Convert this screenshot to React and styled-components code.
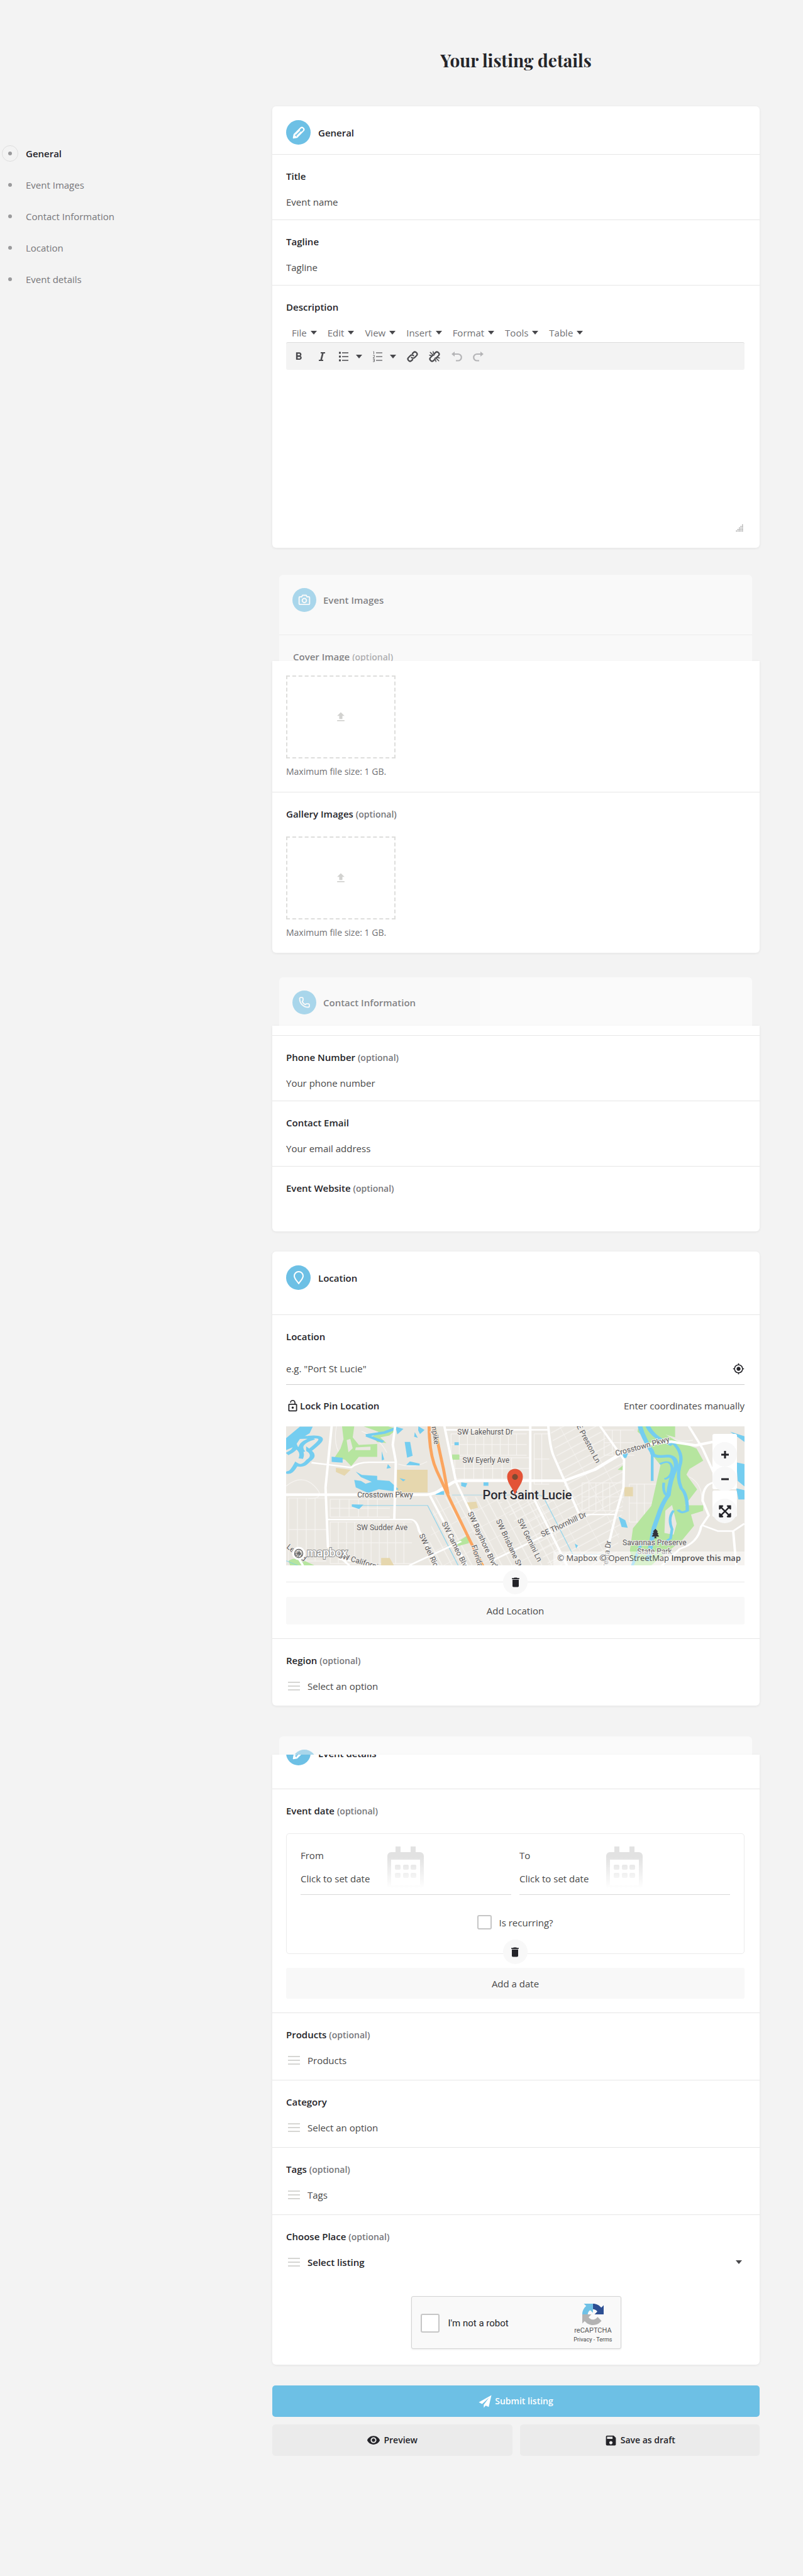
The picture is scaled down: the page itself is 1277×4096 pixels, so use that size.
import React from "react";
import styled, { createGlobalStyle, css } from "styled-components";
import {
  MdMyLocation,
  MdDelete,
  MdFormatBold,
  MdVisibility,
  MdSave,
  MdLockOpen,
  MdFileUpload,
} from "react-icons/md";
import { FaExpandArrowsAlt, FaTree } from "react-icons/fa";

const ink = "#242429";
const body = "#484848";
const line = "#e6e6e6";
const accent = "#6dc0e5";

const GlobalStyle = createGlobalStyle`
  * { box-sizing: border-box; }
  body {
    margin: 0;
    background: #f3f3f3;
    color: ${ink};
    font: 400 15px/20px "Open Sans", "Noto Sans", sans-serif;
  }
  button, input, select, textarea { font: inherit; color: inherit; }
  svg { display: block; flex: none; }
`;

const Page = styled.div`
  display: grid;
  grid-template-columns: 430px minmax(0, 1fr);
  padding: 0 69px 192px 3px;
`;
const Sidebar = styled.nav`
  padding-top: 231px;
`;
const NavList = styled.ul`
  list-style: none;
  margin: 0;
  padding: 0;
  display: flex;
  flex-direction: column;
  gap: 24px;
`;
const NavLink = styled.a`
  display: flex;
  align-items: center;
  gap: 12px;
  height: 26px;
  text-decoration: none;
  color: ${(p) => (p.$active ? ink : "#76767a")};
  font-weight: ${(p) => (p.$active ? 600 : 400)};
`;
const NavDot = styled.span`
  display: flex;
  align-items: center;
  justify-content: center;
  width: 26px;
  height: 26px;
  border-radius: 50%;
  border: 1px solid ${(p) => (p.$active ? "#dedede" : "transparent")};
  &::before {
    content: "";
    width: 6px;
    height: 6px;
    border-radius: 50%;
    background: #9a9a9c;
  }
`;
const PageTitle = styled.h1`
  margin: 0;
  padding: 76px 0 53px;
  text-align: center;
  font: 700 28px/40px "Playfair Display", "Liberation Serif", serif;
`;

const Card = styled.section`
  background: #fff;
  border-radius: ${(p) => (p.$joined ? "0 0 6px 6px" : "6px")};
  box-shadow: 0 1px 4px rgba(0, 0, 0, 0.07);
  margin-top: ${(p) => p.$gap || 0}px;
`;
const Ghost = styled.div`
  height: ${(p) => p.$height}px;
  margin: ${(p) => p.$gap}px 12px 0 11px;
  overflow: hidden;
  border-radius: 6px 6px 0 0;
  background: #fff;
  opacity: 0.55;
`;
const CardHead = styled.header`
  display: flex;
  align-items: center;
  gap: 12px;
  padding: 22px 24px ${(p) => p.$bottom}px 22px;
  border-bottom: 1px solid ${line};
`;
const GhostHead = styled(CardHead)`
  padding: 21px 21px 36px;
  gap: 11px;
`;
const ClippedHead = styled.header`
  height: 55px;
  overflow: hidden;
  border-bottom: 1px solid ${line};
  padding: 0 22px;
`;
const ClippedRow = styled.div`
  display: flex;
  align-items: center;
  gap: 12px;
  margin-top: -22px;
`;
const HeadStrip = styled.div`
  height: 16px;
  border-bottom: 1px solid ${line};
`;
const Badge = styled.span`
  display: flex;
  align-items: center;
  justify-content: center;
  width: ${(p) => p.$size || 39}px;
  height: ${(p) => p.$size || 39}px;
  border-radius: 50%;
  background: ${accent};
  color: #fff;
`;
const HeadTitle = styled.h2`
  margin: 0;
  font-size: inherit;
  line-height: 20px;
  font-weight: 600;
`;

const Field = styled.div`
  padding: 24px 24px ${(p) => p.$bottom || 18}px 22px;
  border-bottom: ${(p) => (p.$last ? 0 : 1)}px solid ${line};
`;
const UploadField = styled(Field)`
  padding-top: ${(p) => (p.$cut ? 23 : 24)}px;
`;
const Label = styled.label`
  display: block;
  font-weight: 600;
  margin-bottom: ${(p) => p.$gap || 21}px;
`;
const Optional = styled.small`
  font-size: 14px;
  line-height: 14px;
  color: #76767a;
`;
const control = css`
  display: block;
  width: 100%;
  min-width: 0;
  height: 20px;
  padding: 0;
  border: 0;
  outline: 0;
  background: transparent;
  line-height: 20px;
  &::placeholder { color: ${body}; opacity: 1; }
`;
const TextInput = styled.input`
  ${control}
`;
const SelectBox = styled.select`
  ${control}
  appearance: none;
  height: 22px;
  margin: -1px 0;
  color: ${(p) => (p.$strong ? ink : body)};
  font-weight: ${(p) => (p.$strong ? 600 : 400)};
`;
const IconRow = styled.div`
  display: flex;
  align-items: center;
  gap: 12px;
  padding: 0 4px 0 3px;
`;
const Caret = styled.span`
  flex: none;
  border: 5px solid transparent;
  border-top: 6px solid ${(p) => p.$color || "#48484c"};
  border-bottom: 0;
`;

const MenuBar = styled.div`
  display: flex;
  align-items: center;
  gap: 17px;
  height: 30px;
  padding: 0 9px;
`;
const MenuButton = styled.button`
  display: flex;
  align-items: center;
  gap: 6px;
  padding: 0;
  border: 0;
  background: none;
  color: #707073;
`;
const ToolBar = styled.div`
  display: flex;
  align-items: center;
  gap: 17px;
  height: 44px;
  padding: 0 10px;
  background: #f3f3f3;
  border-top: 1px solid #dcdcdc;
  border-radius: 3px;
`;
const ToolButton = styled.button`
  display: flex;
  align-items: center;
  justify-content: center;
  gap: 12px;
  padding: 0;
  border: 0;
  background: none;
  color: ${(p) => (p.disabled ? "#b4b4b6" : "#4a4a4e")};
`;
const EditorArea = styled.textarea`
  display: block;
  width: 100%;
  height: 246px;
  border: 0;
  outline: 0;
  resize: none;
  background: transparent;
`;
const GripRow = styled.div`
  display: flex;
  justify-content: flex-end;
  padding-right: 2px;
`;

const DropZone = styled.button`
  display: flex;
  align-items: center;
  justify-content: center;
  width: 174px;
  height: 132px;
  padding: 0;
  border: 2px dashed #dededc;
  background: #fff;
  color: #d2d2d0;
`;
const Hint = styled.p`
  margin: 11px 0 0;
  font-size: 14px;
  color: #707073;
`;

const SearchRow = styled.div`
  display: flex;
  align-items: center;
  height: 51px;
  border-bottom: 1px solid #cfcfcf;
`;
const BareButton = styled.button`
  display: flex;
  align-items: center;
  gap: 1px;
  padding: 0;
  border: 0;
  background: none;
  white-space: nowrap;
  color: ${(p) => (p.$strong ? ink : body)};
  font-weight: ${(p) => (p.$strong ? 600 : 400)};
`;
const PinRow = styled.div`
  display: flex;
  justify-content: space-between;
  align-items: center;
  height: 20px;
  margin: 23px 0;
`;
const MapFrame = styled.div`
  position: relative;
  height: 221px;
  overflow: hidden;
  background: #eae7e1;
`;
const MapControls = styled.div`
  position: absolute;
  top: 12px;
  right: 12px;
  display: flex;
  flex-direction: column;
  gap: 2px;
`;
const MapPanel = styled.div`
  width: 39px;
  height: ${(p) => p.$height}px;
  padding-top: 13px;
  border-radius: 3px;
  background: #fff;
`;
const RoundButton = styled.button`
  display: flex;
  align-items: center;
  justify-content: center;
  flex: none;
  width: 39px;
  height: 39px;
  padding: 0;
  border: 0;
  border-radius: 50%;
  background: #f8f8f8;
  color: ${ink};
`;
const Attribution = styled.div`
  position: absolute;
  right: 0;
  bottom: 0;
  height: 22px;
  padding: 0 6px;
  background: rgba(255, 255, 255, 0.5);
  font-size: 13px;
  white-space: nowrap;
`;
const CreditLink = styled.a`
  color: #4f4f50;
  text-decoration: none;
  font-weight: ${(p) => (p.$strong ? 600 : 400)};
`;
const RemoveRow = styled.div`
  display: flex;
  align-items: center;
  margin-top: 7px;
  &::before, &::after {
    content: "";
    flex: 1;
    height: 1px;
    background: #e8e8e8;
  }
`;
const WideButton = styled.button`
  display: block;
  width: 100%;
  height: ${(p) => p.$height}px;
  margin: ${(p) => p.$gap}px 0 4px;
  border: 0;
  border-radius: 3px;
  background: #f8f8f8;
  color: ${body};
`;

const DateBox = styled.div`
  position: relative;
  padding: 20px 22px 38px;
  border: 1px solid #ebebeb;
  border-radius: 5px;
`;
const DateGrid = styled.div`
  display: grid;
  grid-template-columns: 1fr 1fr;
  gap: 13px;
`;
const DateCell = styled.div`
  display: flex;
  height: 77px;
  border-bottom: 1px solid #d8d8d8;
`;
const DateText = styled.div`
  display: flex;
  flex-direction: column;
  gap: 17px;
  width: 138px;
  padding-top: 4px;
  color: ${body};
`;
const CheckRow = styled.label`
  display: flex;
  align-items: center;
  justify-content: center;
  gap: 11px;
  margin-top: 32px;
  color: ${body};
`;
const CheckBox = styled.input`
  appearance: none;
  flex: none;
  width: ${(p) => p.$size}px;
  height: ${(p) => p.$size}px;
  margin: 0;
  border: 2px solid #c6c6c6;
  border-radius: 3px;
  background: #fff;
`;
const RemoveDate = styled(RoundButton)`
  position: absolute;
  left: calc(50% - 20px);
  bottom: -17px;
`;

const CaptchaRow = styled.div`
  display: flex;
  justify-content: center;
  padding: 43px 0 25px;
`;
const Captcha = styled.div`
  display: flex;
  align-items: center;
  justify-content: space-between;
  width: 334px;
  height: 84px;
  padding: 2px 13px 0 14px;
  border: 1px solid #d3d3d3;
  border-radius: 3px;
  background: #f9f9f9;
  box-shadow: 0 1px 3px rgba(0, 0, 0, 0.08);
  font-family: Roboto, sans-serif;
`;
const CaptchaLabel = styled.label`
  display: flex;
  align-items: center;
  gap: 14px;
`;
const CaptchaBrand = styled.div`
  display: flex;
  flex-direction: column;
  align-items: center;
  font-size: 11px;
  line-height: 18px;
  color: #555;
`;
const CaptchaLinks = styled.span`
  font-size: 9px;
  line-height: 10px;
  a { color: #444; text-decoration: none; }
`;

const Actions = styled.div`
  display: grid;
  grid-template-columns: 1fr 1fr;
  gap: 12px;
  margin-top: 33px;
`;
const ActionButton = styled.button`
  display: flex;
  align-items: center;
  justify-content: center;
  gap: 5px;
  grid-column: ${(p) => (p.$primary ? "1 / -1" : "auto")};
  height: 50px;
  border: 0;
  border-radius: 5px;
  font-size: 14px;
  font-weight: 600;
  background: ${(p) => (p.$primary ? accent : "#ebebeb")};
  color: ${(p) => (p.$primary ? "#fff" : ink)};
`;

const PencilIcon = () => (
  <svg width="22" height="22" viewBox="0 0 24 24" fill="none" stroke="currentColor" strokeWidth="2.3" strokeLinejoin="round">
    <path d="M3 21l1.2-6L15.4 3.8a3 3 0 0 1 4.2 0l.6.6a3 3 0 0 1 0 4.2L9 19.8z" />
    <path d="M14 7.5l-8 8M16.5 10l-8 8" strokeWidth="1.6" />
    <path d="M4 15.4l4.6 4.6L3 21z" fill="currentColor" strokeWidth="1" />
  </svg>
);
const CameraIcon = () => (
  <svg width="20" height="20" viewBox="0 0 24 24" fill="none" stroke="currentColor" strokeWidth="2.3" strokeLinejoin="round">
    <path d="M8.5 3h7l1.5 3h3.500a1.500 1.500 0 0 1 1.500 1.500v11.500a1.500 1.500 0 0 1-1.500 1.500h-17a1.500 1.500 0 0 1-1.500-1.500v-11.500a1.500 1.500 0 0 1 1.500-1.500h3.500z" />
    <circle cx="12" cy="13" r="4" />
  </svg>
);
const PhoneIcon = () => (
  <svg width="20" height="20" viewBox="0 0 24 24" fill="none" stroke="currentColor" strokeWidth="2.2" strokeLinejoin="round">
    <path d="M3 4.500a2 2 0 0 1 2-2h2.500a2 2 0 0 1 2 2v3.500l-1.500 2c1 2.800 3 4.800 6 6l2-1.500h3.500a2 2 0 0 1 2 2v2.500a2 2 0 0 1-2 2c-9.500 0-16.500-7-16.500-16.500z" />
  </svg>
);
const PinIcon = () => (
  <svg width="20" height="22" viewBox="0 0 20 22" fill="none" stroke="currentColor" strokeWidth="2" strokeLinejoin="round">
    <path d="M10 20C8 16.500 3 12.500 3 8a7 7 0 0 1 14 0c0 4.500-5 8.500-7 12z" />
  </svg>
);
const ListLines = () => (
  <svg width="19" height="14" viewBox="0 0 19 14" stroke="#d6d6d3" strokeWidth="2">
    <path d="M0 1h19M0 7h19M0 13h19" />
  </svg>
);
const ItalicIcon = () => (
  <svg width="20" height="16" viewBox="0 0 20 16" fill="none" stroke="currentColor">
    <path d="M11.500 2L8.500 14" strokeWidth="2.600" />
    <path d="M8 2h7M5 14h7" strokeWidth="1.800" />
  </svg>
);
const BulletIcon = () => (
  <svg width="15" height="16" viewBox="0 0 15 16" stroke="currentColor" strokeWidth="1.500">
    <path d="M5 2h10M5 8h10M5 14h10" />
    <path d="M0 2h3M0 8h3M0 14h3" strokeWidth="3" />
  </svg>
);
const NumberIcon = () => (
  <svg width="15" height="18" viewBox="0 0 15 18" fill="none" stroke="currentColor" strokeWidth="1.300" opacity=".75">
    <path d="M5 3h10M5 9h10M5 15h10" />
    <path d="M.5 1h1v4M0 7h2.500v2L0 11h3M0 13h2.500v4H0M.5 15h2" strokeWidth="1" />
  </svg>
);
const ChainIcon = ({ broken }) => (
  <svg width="18" height="18" viewBox="0 0 24 24" fill="none" stroke="currentColor" strokeWidth="3" strokeLinecap="round">
    <path d="M10 14a4.500 4.500 0 0 0 6.500 0l4-4a4.600 4.600 0 0 0-6.500-6.500l-2 2" />
    <path d="M14 10a4.500 4.500 0 0 0-6.500 0l-4 4a4.600 4.600 0 0 0 6.500 6.500l2-2" />
    {broken && <path d="M8.500 15.500l7-7" stroke="#f3f3f3" strokeWidth="4" />}
    {broken && <path d="M3 3l6 6M9 1.500l1 4M1.500 9l4 1M21 21l-6-6M15 22.500l-1-4M22.500 15l-4-1" strokeWidth="2" />}
  </svg>
);
const TurnIcon = ({ flip }) => (
  <svg width="18" height="18" viewBox="0 0 18 18" fill="none" stroke="currentColor" strokeWidth="2.200">
    <g transform={flip ? "matrix(-1 0 0 1 18 0)" : undefined}>
      <path d="M5 5h6.500a5 5 0 0 1 0 10.500H8" />
      <path d="M6 1v8L1 5z" fill="currentColor" stroke="none" />
    </g>
  </svg>
);
const GripIcon = () => (
  <svg width="12" height="12" viewBox="0 0 12 12" fill="#9b9b9b">
    {[0, 1, 2, 3, 4].map((r) =>
      Array.from({ length: r + 1 }, (_, c) => (
        <rect key={`${r}-${c}`} x={10 - c * 2.400} y={r * 2.400} width="1.600" height="1.500" />
      ))
    )}
  </svg>
);
const CalendarIcon = ({ id }) => (
  <svg width="58" height="67" viewBox="0 0 58 67">
    <defs>
      <linearGradient id={id} x1="0" y1="0" x2="0" y2="67" gradientUnits="userSpaceOnUse">
        <stop offset=".25" stopColor="#e2e2e2" />
        <stop offset="1" stopColor="#fff" />
      </linearGradient>
    </defs>
    <g fill={`url(#${id})`}>
      <path d="M13 0h8v9h16V0h8v9h7a6 6 0 0 1 6 6v47a3 3 0 0 1-3 3H3a3 3 0 0 1-3-3V15a6 6 0 0 1 6-6h7zM6 21v41h46V21z" fillRule="evenodd" />
      {[12, 25, 37].map((x) => (
        <React.Fragment key={x}>
          <rect x={x} y="29" width="9" height="8" rx="2" />
          <rect x={x} y="42" width="9" height="8" rx="2" />
        </React.Fragment>
      ))}
    </g>
  </svg>
);
const PlaneIcon = () => (
  <svg width="21" height="21" viewBox="0 0 24 24" fill="currentColor">
    <path d="M23.500.5L.5 13.500l6 3L19 5 9.500 18v5.500l3.500-4 5.500 2.500z" />
  </svg>
);
const CaptchaLogo = () => (
  <svg width="34" height="34" viewBox="0 0 64 64">
    <path fill="#2d4f93" d="M64 31.955l-.033-1.370V4.687l-7.160 7.160C50.948 4.674 42.033.093 32.050.093v16.260c.485 0 .860.057 1.135.163 4.976.393 9.288 3.140 11.828 7.124l-8.307 8.307z" />
    <path fill="#6fc1e6" d="M31.862.094l-1.370.033H4.594l7.160 7.160C4.580 13.147 0 22.060 0 32.046h16.260c0-.485.057-.860.163-1.135.393-4.976 3.140-9.288 7.124-11.828l8.307 8.307z" />
    <path fill="#b3b3b3" d="M.001 32.045l.033 1.370v25.898l7.160-7.160c5.860 7.173 14.774 11.754 24.760 11.754 10.400 0 19.622-4.960 25.458-12.640l-11.736-11.860a15.550 15.550 0 0 1-4.754 5.334c-2.050 1.600-4.952 2.906-8.968 2.906-.485 0-.860-.057-1.135-.163-4.976-.393-9.288-3.140-11.828-7.124l8.307-8.307z" />
  </svg>
);

const MapLabel = styled.text`
  font: ${(p) => p.$weight || 400} ${(p) => p.$size || 12}px Roboto, sans-serif;
  fill: ${(p) => p.$fill || "#5c5a5c"};
  stroke: #f1efeb;
  stroke-width: 2px;
  paint-order: stroke;
`;
const streetLabels = [
  ["npike", 231, 1, 81],
  ["E Preston Ln", 461, 0, 62],
  ["SW Lakehurst Dr", 272, 13, 0],
  ["SW Eyerly Ave", 280, 58, 0],
  ["Crosstown Pkwy", 113, 113, 0],
  ["Crosstown Pkwy", 524, 47, -15],
  ["SW Sudder Ave", 112, 165, 0],
  ["SW del Rio Blvd", 211, 173, 65],
  ["SW Cameo Blvd", 247, 154, 64],
  ["SW Bayshore Blvd", 288, 138, 65],
  ["SW Brisbane St", 333, 150, 65],
  ["SW Gemini Ln", 367, 149, 64],
  ["Florida's Tpke", 294, 190, 72],
  ["SE Thornhill Dr", 407, 176, -25],
  ["Floresta Dr", 508, 240, -82],
  ["SW California Blvd", 82, 208, 17],
  ["Leland", 0, 193, 38],
];

const hatch = (x, y, w, h, step, id) => (
  <g key={id}>
    {Array.from({ length: Math.floor(w / step) }, (_, i) => (
      <path key={i} d={`M${x + i * step} ${y}v${h}`} />
    ))}
    <path d={`M${x} ${y}h${w}M${x} ${y + h / 2}h${w}M${x} ${y + h}h${w}`} />
  </g>
);

const CityMap = () => (
  <svg width="100%" height="221" viewBox="0 0 728 221" preserveAspectRatio="xMidYMid slice" role="img" aria-label="Map of Port Saint Lucie">
    <defs>
      <pattern id="diag" width="14" height="26" patternUnits="userSpaceOnUse" patternTransform="rotate(-28)">
        <path d="M0 0h14M3 0v26" stroke="#f6f4f1" strokeWidth="1.400" />
      </pattern>
      <pattern id="slope" width="12" height="32" patternUnits="userSpaceOnUse" patternTransform="rotate(62)">
        <path d="M0 0h12M3 0v32" stroke="#f6f4f1" strokeWidth="1.300" />
      </pattern>
    </defs>
    <path d="M418 0h75l45 58v40l-15 123h-105l-80-100 105-18z" fill="url(#slope)" />
    <path d="M235 112h180l25 109H225z" fill="url(#diag)" />
    <g fill="none" stroke="#f6f4f1" strokeWidth="1.200">
      {hatch(262, 12, 120, 34, 13, "a")}
      {hatch(268, 50, 118, 34, 15, "b")}
      {hatch(394, 12, 24, 80, 12, "c")}
      {hatch(4, 114, 60, 100, 14, "d")}
      {hatch(70, 152, 130, 66, 13, "e")}
      {hatch(70, 116, 95, 28, 15, "f")}
      {hatch(470, 90, 65, 44, 11, "g")}
      {hatch(545, 92, 46, 60, 12, "h")}
      {hatch(505, 6, 48, 40, 13, "i")}
      <path d="M0 95q25-20 45 0t-10 20M80 0q-6 30 8 48M120 8q30 12 40 34M178 60q24 8 46-4M640 80q22 12 20 40M596 10q22 18 50 12" />
    </g>
    <g transform="scale(.4853 .295) translate(-27 -66)">
      <g fill="#b6e59f">
        <path d="M210 66h40l-5 60 20 40 60-5v70h-60l-25 50-20-35-35-10 20-50 10-50z" />
        <path d="M280 66h80l30 15-25 35-30 10 20 30-30-5-15-30 20-25z" />
        <path d="M570 218h24v28h-24zM580 695l45-45v45l-40 18zM462 300l22 15v35l-22-10zM1112 300l18-25v28zM35 790q20-20 45-5l40 30H40z" />
        <path d="M1180 66h60l30 45 30 30 70 45 22 65-45 45-10 30 35 80-40 85 60 0v30l-40 20 10 60-40 80-70 90-30 44h-60l-10-80 10-120 60-120 30-220-30-60-10-70-35-50z" />
        <path d="M1240 66h60v60l-40-20z" />
      </g>
      <g fill="#eae7e1">
        <path d="M1268 520l22-30 15 100-10 60-30-10z" />
        <path d="M225 140l12-6 8 50-14 22zM255 180l48-4v18h-50z" />
      </g>
      <g fill="#e6d7ae">
        <path d="M390 300h100v122H390zM190 290l48 10-20 32-28-20zM617 476l32-4 6 32-30 14zM1134 393h28v50h-28zM338 775h28l14 40h-42z" />
      </g>
      <g fill="#74cdf0">
        <path d="M27 130l45-62h42l-10 36-32 30-16 40-29 20z" />
        <path d="M255 310l20 18 50 5v22l40 5 30 45-20 10-45-10-35 20-40-30-5-40 22 5 15 15 20-10-35-25z" />
        <path d="M385 68l26 12-20 30zM460 66l20 20-15 22-6-20zM448 98l10 30-12-6zM415 150h18l8 75-18 10zM432 255l32 12v10l-44-2zM340 200l8 45-8 4zM360 270l10 20-14 4zM176 230l36 6v26l-36-4zM398 345l20 8-8 10zM578 152h14v16h-14zM600 368l20 5-6 22-14-8zM673 368h16v18h-16zM516 420l28-5v20h-28zM242 486l38 2-14 24-24-14zM1115 552l22 20 8 40-20-4zM972 698l10 10-6 16zM1130 205l16 8-6 24h-12zM1500 260l27 10v120l-22-30zM1500 400l27 10v50h-20zM1480 95l47 25v30z" />
      </g>
      <g fill="none" stroke="#74cdf0">
        <path strokeWidth="15" d="M30 215q40-30 20-60t50-30q60-10 30 35t-30 35q25 30 0 55-20 40-40 20-20 60-32 40M118 130q-60 30-35 75M60 180q25 20 15 60" />
        <path strokeWidth="13" d="M288 115l60-15 42-25M290 115q30 20 55 35" />
        <path strokeWidth="15" d="M1185 66q10 60 40 140 0 30 50 20 30 0 28 60-20 70-25 150-20 40-35 120l-12 55-20 180M1210 66q20 60 60 85l20 15" />
        <path strokeWidth="11" d="M1290 150q40 60 25 130-10 60 5 120 20 30 20 120-20 20-30-5" />
        <path strokeWidth="9" d="M1250 270q35-30 40 20 0 50-25 60M1263 370q-5 60 15 75M1295 520q-20 40-5 100l-5 50-30 30M1160 815l30-120M1225 190v170" />
        <path strokeWidth="3" opacity=".7" d="M265 492h225l100 323M570 436h270q30-5 35 30l90 290h100M27 790l45 30" />
      </g>
      <g fill="none" stroke="#fff" strokeWidth="8" strokeLinejoin="round">
        <path d="M176 66l-20 330 8 320 70 99M384 66l-8 100 10 90-5 310M110 262l50 10 80 16q20-28 60-28h85M164 568h270q20 0 28 60l60 187M430 815l170-130M498 440l120 375M545 66l38 300 130 449M545 85h340M826 66v350l120 399M885 66q5 120 20 170l80 300M1055 66l78 180-2 150-25 145h-90L700 790M1106 541l-40 274M1080 760H940M1345 66l45 120 50 180q-50 0-50 100l20 80-25 60q-10 90-70 120l-65 100M1390 600l50 30h50l37-40M1490 630l10 185M27 720q30 20 55 95M200 780l120 35" />
        <path strokeWidth="14" d="M27 434h460q25 0 50-30l35-35q10-10 40-10h325l100-60 90-90q60-50 160-60l80 20 60-20h70" />
      </g>
      <g fill="none" stroke="#fba55f" strokeWidth="10">
        <path d="M495 66q0 150 25 240l45 160 65 220 45 145M512 66q15 120 30 230l15 135" />
      </g>
    </g>
    {streetLabels.map(([text, x, y, turn]) => (
      <MapLabel key={`${text}${x}`} transform={`translate(${x} ${y}) rotate(${turn})`}>{text}</MapLabel>
    ))}
    <MapLabel x="383" y="116" textAnchor="middle" $size={20} $weight={500} $fill="#2b2b33">Port Saint Lucie</MapLabel>
    <MapLabel x="585" y="189" textAnchor="middle">Savannas Preserve</MapLabel>
    <MapLabel x="585" y="203" textAnchor="middle">State Park</MapLabel>
    <FaTree x="579" y="163" width="11" height="13" color="#33333a" />
    <path d="M363.500 109.500C361 99 351 91 351 80a12.500 12.500 0 0 1 25 0c0 11-10 19-12.500 29.500z" fill="#e35336" />
    <circle cx="363.500" cy="80.500" r="4.600" fill="#7c4a32" />
    <circle cx="20" cy="202" r="8.500" fill="none" stroke="#fff" strokeWidth="4" />
    <circle cx="20" cy="202" r="6.500" fill="none" stroke="#6d6d6d" strokeWidth="1.500" />
    <path d="M20.500 197l1.500 3.200 3 1.500-3 1.400-1.500 3-1.400-3-3-1.400 3-1.500z" fill="#6d6d6d" />
    <text x="33" y="207" fontFamily="Roboto, sans-serif" fontWeight="500" fontSize="18" fill="#fff" stroke="#8b8b8b" strokeWidth="2" paintOrder="stroke">mapbox</text>
  </svg>
);

const FieldLabel = ({ id, optional, gap, children }) => (
  <Label htmlFor={id} $gap={gap}>
    {children} {optional && <Optional>(optional)</Optional>}
  </Label>
);
const TextField = ({ id, label, optional, placeholder, type = "text", last }) => (
  <Field $last={last}>
    <FieldLabel id={id} optional={optional}>{label}</FieldLabel>
    <TextInput id={id} type={type} placeholder={placeholder} />
  </Field>
);
const PickField = ({ id, label, optional, text, select, strong, bottom = 21, last }) => (
  <Field $bottom={bottom} $last={last}>
    <FieldLabel id={id} optional={optional}>{label}</FieldLabel>
    <IconRow>
      <ListLines />
      {select ? (
        <SelectBox id={id} $strong={strong}><option>{text}</option></SelectBox>
      ) : (
        <TextInput id={id} placeholder={text} />
      )}
      {strong && <Caret />}
    </IconRow>
  </Field>
);
const DateField = ({ id, label }) => (
  <DateCell>
    <DateText>
      <label htmlFor={id}>{label}</label>
      <TextInput id={id} placeholder="Click to set date" />
    </DateText>
    <CalendarIcon id={`${id}-fade`} />
  </DateCell>
);

const sections = ["General", "Event Images", "Contact Information", "Location", "Event details"];
const menus = ["File", "Edit", "View", "Insert", "Format", "Tools", "Table"];

export default function App() {
  return (
    <>
      <GlobalStyle />
      <Page>
        <Sidebar aria-label="Sections">
          <NavList>
            {sections.map((name, i) => (
              <li key={name}>
                <NavLink href="#" $active={i === 0}>
                  <NavDot $active={i === 0} />
                  {name}
                </NavLink>
              </li>
            ))}
          </NavList>
        </Sidebar>
        <main>
          <PageTitle>Your listing details</PageTitle>

          <Card>
            <CardHead $bottom={15}>
              <Badge><PencilIcon /></Badge>
              <HeadTitle>General</HeadTitle>
            </CardHead>
            <TextField id="title" label="Title" placeholder="Event name" />
            <TextField id="tagline" label="Tagline" placeholder="Tagline" />
            <Field $last $bottom={25}>
              <FieldLabel id="description" gap={16}>Description</FieldLabel>
              <MenuBar>
                {menus.map((m) => (
                  <MenuButton key={m} type="button">{m}<Caret /></MenuButton>
                ))}
              </MenuBar>
              <ToolBar>
                <ToolButton type="button" aria-label="Bold"><MdFormatBold size={20} /></ToolButton>
                <ToolButton type="button" aria-label="Italic"><ItalicIcon /></ToolButton>
                <ToolButton type="button" aria-label="Bullet list"><BulletIcon /><Caret /></ToolButton>
                <ToolButton type="button" aria-label="Numbered list"><NumberIcon /><Caret /></ToolButton>
                <ToolButton type="button" aria-label="Insert link"><ChainIcon /></ToolButton>
                <ToolButton type="button" aria-label="Remove link"><ChainIcon broken /></ToolButton>
                <ToolButton type="button" aria-label="Undo" disabled><TurnIcon /></ToolButton>
                <ToolButton type="button" aria-label="Redo" disabled><TurnIcon flip /></ToolButton>
              </ToolBar>
              <EditorArea id="description" />
              <GripRow><GripIcon /></GripRow>
            </Field>
          </Card>

          <Ghost $height={137} $gap={43}>
            <GhostHead>
              <Badge $size={38}><CameraIcon /></Badge>
              <HeadTitle>Event Images</HeadTitle>
            </GhostHead>
            <Field $last>
              <FieldLabel id="cover" optional>Cover Image</FieldLabel>
            </Field>
          </Ghost>
          <Card $joined>
            <UploadField $cut $bottom={22}>
              <DropZone id="cover" type="button" aria-label="Upload cover image"><MdFileUpload size={20} /></DropZone>
              <Hint>Maximum file size: 1 GB.</Hint>
            </UploadField>
            <UploadField $last $bottom={22}>
              <FieldLabel id="gallery" optional gap={26}>Gallery Images</FieldLabel>
              <DropZone id="gallery" type="button"><MdFileUpload size={20} /></DropZone>
              <Hint>Maximum file size: 1 GB.</Hint>
            </UploadField>
          </Card>

          <Ghost $height={77} $gap={39}>
            <GhostHead>
              <Badge $size={38}><PhoneIcon /></Badge>
              <HeadTitle>Contact Information</HeadTitle>
            </GhostHead>
          </Ghost>
          <Card $joined>
            <HeadStrip />
            <TextField id="phone" label="Phone Number" optional placeholder="Your phone number" type="tel" />
            <TextField id="email" label="Contact Email" placeholder="Your email address" type="email" />
            <TextField id="website" label="Event Website" optional type="url" last />
          </Card>

          <Card $gap={32}>
            <CardHead $bottom={39}>
              <Badge><PinIcon /></Badge>
              <HeadTitle>Location</HeadTitle>
            </CardHead>
            <Field>
              <FieldLabel id="location" gap={16}>Location</FieldLabel>
              <SearchRow>
                <TextInput id="location" placeholder={'e.g. "Port St Lucie"'} />
                <BareButton type="button" aria-label="Use my location" $strong><MdMyLocation size={19} /></BareButton>
              </SearchRow>
              <PinRow>
                <BareButton type="button" $strong><MdLockOpen size={21} />Lock Pin Location</BareButton>
                <BareButton type="button">Enter coordinates manually</BareButton>
              </PinRow>
              <MapFrame>
                <CityMap />
                <Attribution>
                  <CreditLink href="#">© Mapbox</CreditLink> <CreditLink href="#">© OpenStreetMap</CreditLink>{" "}
                  <CreditLink href="#" $strong>Improve this map</CreditLink>
                </Attribution>
                <MapControls>
                  <MapPanel $height={88}>
                    <RoundButton type="button" aria-label="Zoom in">
                      <svg width="14" height="14" stroke="currentColor" strokeWidth="3"><path d="M7 1v12M1 7h12" /></svg>
                    </RoundButton>
                    <RoundButton type="button" aria-label="Zoom out">
                      <svg width="14" height="14" stroke="currentColor" strokeWidth="3"><path d="M1 7h12" /></svg>
                    </RoundButton>
                  </MapPanel>
                  <MapPanel $height={42}>
                    <RoundButton type="button" aria-label="Full screen"><FaExpandArrowsAlt size={22} /></RoundButton>
                  </MapPanel>
                </MapControls>
              </MapFrame>
              <RemoveRow>
                <RoundButton type="button" aria-label="Remove location"><MdDelete size={20} /></RoundButton>
              </RemoveRow>
              <WideButton type="button" $height={44} $gap={4}>Add Location</WideButton>
            </Field>
            <PickField id="region" label="Region" optional text="Select an option" select last />
          </Card>

          <Ghost $height={29} $gap={49}>
            <GhostHead>
              <Badge $size={38} />
            </GhostHead>
          </Ghost>
          <Card $joined>
            <ClippedHead>
              <ClippedRow>
                <Badge><PencilIcon /></Badge>
                <HeadTitle>Event details</HeadTitle>
              </ClippedRow>
            </ClippedHead>
            <Field>
              <FieldLabel id="date-from" optional gap={26}>Event date</FieldLabel>
              <DateBox>
                <DateGrid>
                  <DateField id="date-from" label="From" />
                  <DateField id="date-to" label="To" />
                </DateGrid>
                <CheckRow>
                  <CheckBox type="checkbox" $size={23} />
                  Is recurring?
                </CheckRow>
                <RemoveDate type="button" aria-label="Remove date"><MdDelete size={20} /></RemoveDate>
              </DateBox>
              <WideButton type="button" $height={49} $gap={22}>Add a date</WideButton>
            </Field>
            <PickField id="products" label="Products" optional text="Products" />
            <PickField id="category" label="Category" text="Select an option" select />
            <PickField id="tags" label="Tags" optional text="Tags" />
            <PickField id="place" label="Choose Place" optional text="Select listing" select strong bottom={1} last />
            <CaptchaRow>
              <Captcha>
                <CaptchaLabel>
                  <CheckBox type="checkbox" $size={30} />
                  I'm not a robot
                </CaptchaLabel>
                <CaptchaBrand>
                  <CaptchaLogo />
                  reCAPTCHA
                  <CaptchaLinks><a href="#">Privacy</a> - <a href="#">Terms</a></CaptchaLinks>
                </CaptchaBrand>
              </Captcha>
            </CaptchaRow>
          </Card>

          <Actions>
            <ActionButton type="submit" $primary><PlaneIcon />Submit listing</ActionButton>
            <ActionButton type="button"><MdVisibility size={22} />Preview</ActionButton>
            <ActionButton type="button"><MdSave size={21} />Save as draft</ActionButton>
          </Actions>
        </main>
      </Page>
    </>
  );
}
